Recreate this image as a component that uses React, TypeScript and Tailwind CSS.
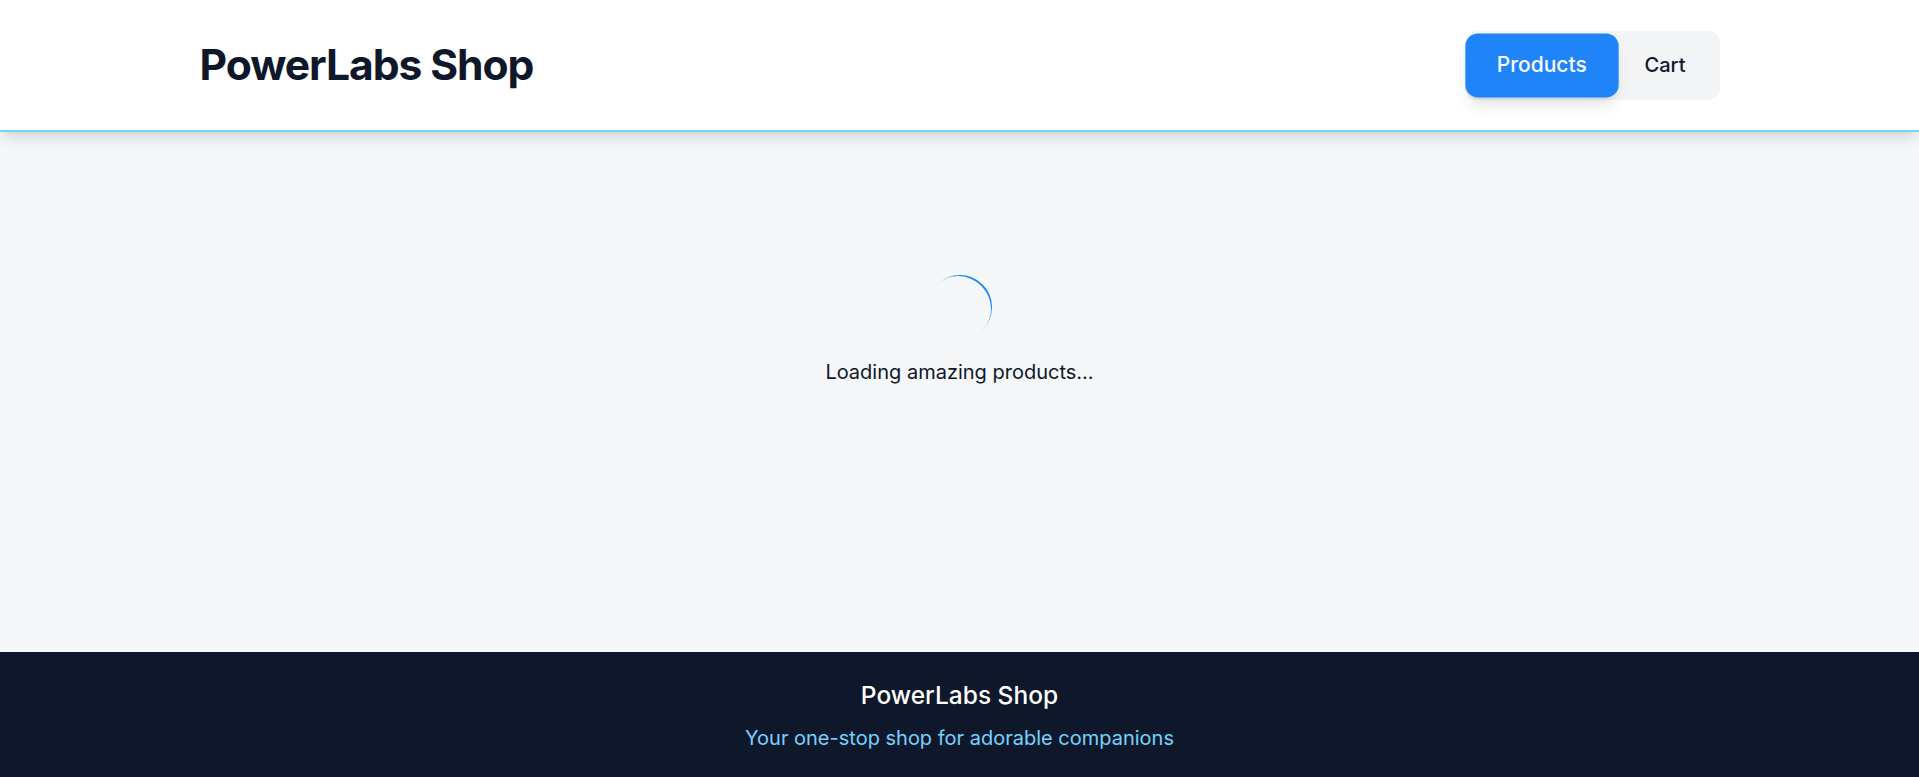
import React from "react";

export default function App() {
  return (
    <div
      className="min-h-screen flex flex-col bg-[#f5f7f9]"
      style={{ fontFamily: "Inter, 'Noto Sans', sans-serif" }}
    >
      <header className="bg-white border-b-2 border-sky-300 shadow-lg relative z-10">
        <div className="max-w-[1520px] mx-auto h-[130px] flex items-center justify-between">
          <h1 className="text-[42.6px] font-bold tracking-tight text-[#0f172a]">PowerLabs Shop</h1>
          <nav className="flex bg-gray-100 rounded-xl p-1">
            <button className="px-[30px] py-4 text-xl font-medium leading-[29px] rounded-xl bg-[#1e84f7] text-white shadow-lg scale-105">
              Products
            </button>
            <button className="px-[30px] py-4 text-xl font-medium leading-[29px] rounded-xl text-[#0f172a]">
              Cart
            </button>
          </nav>
        </div>
      </header>

      <main className="flex-1 flex flex-col items-center pt-[143px]">
        <div className="w-16 h-16 rounded-full border-t-2 border-[#1e84f7] rotate-45"></div>
        <p className="mt-[19px] text-xl leading-7 text-[#0f172a]">Loading amazing products...</p>
      </main>

      <footer className="bg-slate-900 text-center pt-[27px] pb-[25px]">
        <h2 className="text-[24.5px] leading-8 font-medium text-white">PowerLabs Shop</h2>
        <p className="mt-[13px] text-xl leading-7 text-sky-300">Your one-stop shop for adorable companions</p>
      </footer>
    </div>
  );
}
